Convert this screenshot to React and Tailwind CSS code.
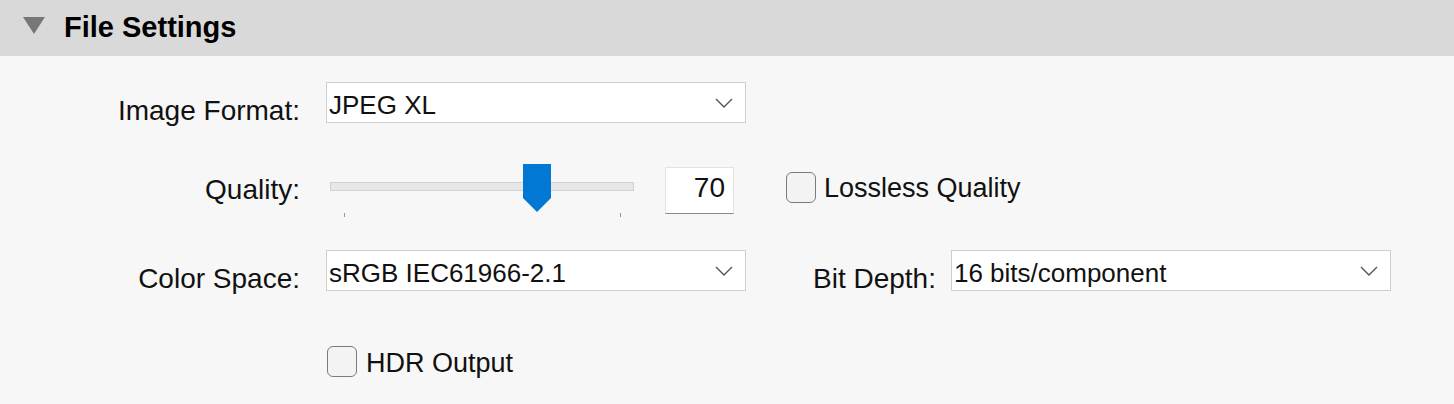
import React from 'react';

function Chevron() {
  return (
    <svg width="18" height="10" viewBox="0 0 18 10" className="shrink-0">
      <path d="M1 1 L9 9 L17 1" fill="none" stroke="#555" strokeWidth="1.4" />
    </svg>
  );
}

function Select({ value, width }) {
  return (
    <div className={'flex h-[41px] items-start justify-between border border-[#cfcfcf] bg-white pl-[2px] pr-[12px] ' + width}>
      <span className="pt-[6px] text-[26px] leading-[33px] text-[#111]">{value}</span>
      <div className="self-center">
        <Chevron />
      </div>
    </div>
  );
}

function Checkbox() {
  return <div className="h-[31px] w-[30px] shrink-0 rounded-[6px] border-[1.5px] border-[#7a7a7a] bg-[#f3f3f3]" />;
}

function Label({ children }) {
  return <div className="w-[300px] shrink-0 pt-[15px] text-right text-[28px] leading-none text-[#111]">{children}</div>;
}

export default function App() {
  return (
    <div className="h-[404px] w-full bg-[#f7f7f7] font-['Liberation_Sans',Arial,sans-serif]">
      {/* header */}
      <div className="flex h-[56px] items-start bg-[#d9d9d9] pt-[13px]">
        <svg width="22" height="17" viewBox="0 0 22 17" className="ml-[23px] mt-[4px]">
          <path d="M0 0 H22 L11 17 Z" fill="#777" />
        </svg>
        <span className="ml-[19px] text-[29px] font-bold leading-none text-black">File Settings</span>
      </div>

      <div className="pt-[26px]">
        {/* image format */}
        <div className="flex h-[41px] items-start">
          <Label>Image Format:</Label>
          <div className="ml-[26px]">
            <Select value="JPEG XL" width="w-[420px]" />
          </div>
        </div>

        {/* quality */}
        <div className="mt-[41px] flex h-[53px] items-start">
          <div className="w-[300px] shrink-0 pt-[12px] text-right text-[28px] leading-none text-[#111]">Quality:</div>
          <div className="relative ml-[26px] h-[53px] w-[312px] shrink-0">
            <div className="absolute left-[4px] top-[18px] h-[9px] w-[304px] border border-[#d2d2d2] bg-[#e7e7e7]" />
            <div className="absolute left-[18px] top-[49px] h-[4px] w-[1px] bg-[#999]" />
            <div className="absolute left-[294px] top-[49px] h-[4px] w-[1px] bg-[#999]" />
            <svg width="28" height="48" viewBox="0 0 28 48" className="absolute left-[197px] top-0">
              <path d="M0 0 H28 V34 L14 48 L0 34 Z" fill="#0078d4" />
            </svg>
          </div>
          <div className="ml-[27px] mt-[3px] h-[47px] w-[69px] shrink-0 border border-[#e3e3e3] border-b-[#8a8a8a] bg-white pr-[8px] pt-[6px] text-right text-[28px] leading-none text-[#111]">
            70
          </div>
          <div className="ml-[52px] mt-[8px]">
            <Checkbox />
          </div>
          <span className="ml-[8px] pt-[11px] text-[27px] leading-none text-[#111]">Lossless Quality</span>
        </div>

        {/* color space / bit depth */}
        <div className="mt-[33px] flex h-[41px] items-start">
          <Label>Color Space:</Label>
          <div className="ml-[26px]">
            <Select value="sRGB IEC61966-2.1" width="w-[420px]" />
          </div>
          <div className="ml-[67px] pt-[15px] text-[28px] leading-none text-[#111]">Bit Depth:</div>
          <div className="ml-[15px]">
            <Select value="16 bits/component" width="w-[440px]" />
          </div>
        </div>

        {/* hdr */}
        <div className="ml-[327px] mt-[55px] flex items-start">
          <Checkbox />
          <span className="ml-[9px] pt-[4px] text-[27px] leading-none text-[#111]">HDR Output</span>
        </div>
      </div>
    </div>
  );
}
